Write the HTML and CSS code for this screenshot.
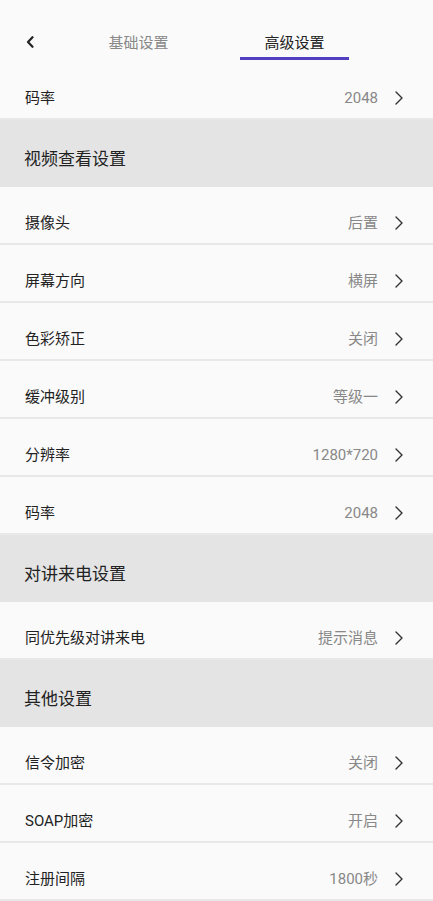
FILE: index.html
```html
<!DOCTYPE html>
<html lang="zh-CN">
<head>
  <meta charset="UTF-8">
  <meta name="viewport" content="width=device-width, initial-scale=1.0">
  <title>高级设置</title>
  <link rel="stylesheet" href="styles.css">
</head>
<body>

  <!-- Top bar with tabs -->
  <header class="topbar">
    <div class="back">
      <svg width="8" height="12" viewBox="0 0 8 12"><polyline points="6.5,1.2 2,6 6.5,10.8" fill="none" stroke="#222" stroke-width="2.2" stroke-linecap="round" stroke-linejoin="round"/></svg>
    </div>
    <div class="tab">基础设置</div>
    <div class="tab active">高级设置</div>
  </header>

  <div class="row"><span class="label">码率</span><span class="value">2048</span><svg class="arrow" width="8" height="14" viewBox="0 0 8 14"><polyline points="1,1 7,7 1,13" /></svg></div>

  <div class="section">视频查看设置</div>
  <div class="row"><span class="label">摄像头</span><span class="value">后置</span><svg class="arrow" width="8" height="14" viewBox="0 0 8 14"><polyline points="1,1 7,7 1,13" /></svg></div>
  <div class="row"><span class="label">屏幕方向</span><span class="value">横屏</span><svg class="arrow" width="8" height="14" viewBox="0 0 8 14"><polyline points="1,1 7,7 1,13" /></svg></div>
  <div class="row"><span class="label">色彩矫正</span><span class="value">关闭</span><svg class="arrow" width="8" height="14" viewBox="0 0 8 14"><polyline points="1,1 7,7 1,13" /></svg></div>
  <div class="row"><span class="label">缓冲级别</span><span class="value">等级一</span><svg class="arrow" width="8" height="14" viewBox="0 0 8 14"><polyline points="1,1 7,7 1,13" /></svg></div>
  <div class="row"><span class="label">分辨率</span><span class="value">1280*720</span><svg class="arrow" width="8" height="14" viewBox="0 0 8 14"><polyline points="1,1 7,7 1,13" /></svg></div>
  <div class="row"><span class="label">码率</span><span class="value">2048</span><svg class="arrow" width="8" height="14" viewBox="0 0 8 14"><polyline points="1,1 7,7 1,13" /></svg></div>

  <div class="section">对讲来电设置</div>
  <div class="row"><span class="label">同优先级对讲来电</span><span class="value">提示消息</span><svg class="arrow" width="8" height="14" viewBox="0 0 8 14"><polyline points="1,1 7,7 1,13" /></svg></div>

  <div class="section">其他设置</div>
  <div class="row"><span class="label">信令加密</span><span class="value">关闭</span><svg class="arrow" width="8" height="14" viewBox="0 0 8 14"><polyline points="1,1 7,7 1,13" /></svg></div>
  <div class="row"><span class="label">SOAP加密</span><span class="value">开启</span><svg class="arrow" width="8" height="14" viewBox="0 0 8 14"><polyline points="1,1 7,7 1,13" /></svg></div>
  <div class="row"><span class="label">注册间隔</span><span class="value">1800秒</span><svg class="arrow" width="8" height="14" viewBox="0 0 8 14"><polyline points="1,1 7,7 1,13" /></svg></div>

</body>
</html>
```

FILE: styles.css
```css
* {
  box-sizing: border-box;
}

body {
  margin: 0;
  background: #fafafa;
  color: #222;
  font-family: Roboto, "Noto Sans CJK SC", sans-serif;
  font-size: 15px;
}

/* Top bar */
.topbar {
  display: flex;
  align-items: flex-start;
  height: 62px;
  padding-left: 24px;
}

.topbar .back {
  width: 60px;
  padding-top: 36px;
  padding-left: 2px;
}

.topbar .back svg {
  display: block;
}

.tab {
  width: 109px;
  padding-top: 33px;
  padding-bottom: 4px;
  line-height: 20px;
  text-align: center;
  color: #888;
  border-bottom: 3px solid transparent;
}

.tab + .tab {
  margin-left: 47px;
}

.tab.active {
  color: #222;
  border-bottom-color: #5040c0;
}

/* Setting rows */
.row {
  display: flex;
  align-items: center;
  padding: 26px 30px 10px 25px;
  line-height: 20px;
  border-bottom: 2px solid #e8e8e8;
}

.row .label {
  flex: 1;
}

.row .value {
  color: #888;
  margin-right: 17px;
}

.row .arrow {
  display: block;
}

.row .arrow polyline {
  fill: none;
  stroke: #333;
  stroke-width: 1.4;
  stroke-linecap: round;
  stroke-linejoin: round;
}

/* Section headers */
.section {
  height: 67px;
  padding: 29px 0 0 24px;
  line-height: 20px;
  font-size: 17px;
  background: #e4e4e4;
}
```
